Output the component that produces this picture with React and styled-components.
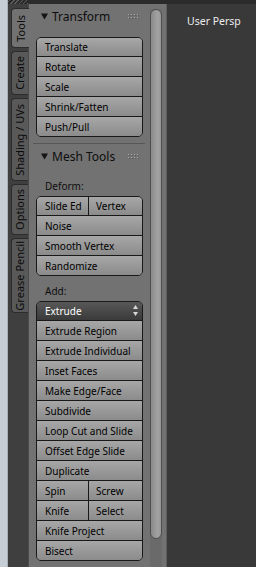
import React from "react";
import styled, { createGlobalStyle } from "styled-components";

const GlobalStyle = createGlobalStyle`
  *, *::before, *::after { box-sizing: border-box; }
  html, body { margin: 0; padding: 0; background: #393939; }
  body { font-family: "Noto Sans", "DejaVu Sans", sans-serif; }
`;

const Screen = styled.div`
  display: flex;
  width: 256px;
  height: 567px;
  overflow: hidden;
`;

const WindowEdge = styled.div`
  flex: none;
  width: 8px;
  background: #c7cdd4;
  border-right: 1px solid #a9b0b8;
`;

const Main = styled.div`
  flex: 1;
  display: flex;
  flex-direction: column;
  min-width: 0;
`;

const TopBar = styled.div`
  flex: none;
  height: 4px;
  background: #2b2b2b;
  &::before {
    content: "";
    display: block;
    width: 20px;
    height: 4px;
    background: repeating-linear-gradient(-45deg, #5c5c5c 0 1px, #2b2b2b 1px 3px);
  }
`;

const Body = styled.div`
  flex: 1;
  display: flex;
  min-height: 0;
`;

/* vertical tabs */
const TabStrip = styled.div`
  flex: none;
  width: 20px;
  display: flex;
  flex-direction: column;
  gap: 3px;
  padding: 4px 0 0 3px;
  background: #3f3f3f;
`;

const Tab = styled.div`
  height: ${(p) => p.$h}px;
  display: flex;
  align-items: center;
  justify-content: center;
  border: 1px solid #2c2c2c;
  border-right: none;
  border-radius: 4px 0 0 4px;
  background: ${(p) => (p.$active ? "#727272" : "#595959")};
  margin-right: ${(p) => (p.$active ? "-1px" : "0")};
  position: relative;
  z-index: ${(p) => (p.$active ? 1 : 0)};
`;

const TabLabel = styled.span`
  writing-mode: vertical-rl;
  transform: rotate(180deg);
  font-size: 11px;
  line-height: 12px;
  color: #0a0a0a;
  white-space: nowrap;
`;

/* tool shelf */
const Shelf = styled.div`
  flex: none;
  width: 120px;
  background: #727272;
  border-left: 1px solid #4b4b4b;
`;

const Panel = styled.section`
  padding-bottom: 6px;
`;

const Divider = styled.div`
  height: 1px;
  margin: 0 3px 0 4px;
  background: #575757;
`;

const PanelHeader = styled.div`
  height: 24px;
  display: flex;
  align-items: center;
  gap: 4px;
  padding: 0 8px 0 12px;
  font-size: 12px;
  color: #0d0d0d;
`;

const HeaderTitle = styled.span`
  flex: 1;
  white-space: nowrap;
`;

const PanelBody = styled.div`
  padding: ${(p) => p.$top}px 5px 0 7px;
`;

const GroupLabel = styled.div`
  height: 20px;
  display: flex;
  align-items: center;
  padding-left: 9px;
  margin-top: ${(p) => p.$gap || 0}px;
  font-size: 10px;
  color: #0d0d0d;
`;

const Column = styled.div`
  display: flex;
  flex-direction: column;
  border: 1px solid #191919;
  border-radius: 5px;
  overflow: hidden;
`;

const Row = styled.div`
  display: flex;
  height: 20px;
  border-top: 1px solid #191919;
  &:first-child {
    height: 18px;
    border-top: none;
  }
`;

const ToolButton = styled.div`
  flex: 1;
  display: flex;
  align-items: center;
  padding: 0 8px;
  background: linear-gradient(#a7a7a7, #8b8b8b);
  font-size: 10px;
  color: #000;
  white-space: nowrap;
  overflow: hidden;
  & + & {
    flex: 0 0 54px;
    border-left: 1px solid #191919;
    padding-left: 7px;
  }
`;

const Dropdown = styled.div`
  flex: none;
  height: 18px;
  display: flex;
  align-items: center;
  justify-content: space-between;
  padding: 0 4px 0 8px;
  background: linear-gradient(#585858, #3a3a3a);
  font-size: 10px;
  color: #fff;
`;

/* scrollbar */
const Gutter = styled.div`
  flex: none;
  width: 19px;
  display: flex;
  padding: 5px 4px 0 2px;
  background: #727272;
  border-right: 1px solid #5e5e5e;
`;

const Track = styled.div`
  flex: 1;
  background: #6a6a6a;
`;

const Thumb = styled.div`
  height: 530px;
  border: 1px solid #4e4e4e;
  border-radius: 7px;
  background: linear-gradient(to right, #8a8a8a, #a3a3a3 70%, #959595);
`;

/* 3d view */
const Viewport = styled.div`
  flex: 1;
  background: #393939;
  padding: 10px 0 0 20px;
`;

const ViewLabel = styled.div`
  font-size: 10.5px;
  line-height: 14px;
  color: #ececec;
  white-space: nowrap;
`;

const Triangle = () => (
  <svg width="7" height="7" viewBox="0 0 7 7">
    <path d="M0 0.5 H7 L3.5 6.5 Z" fill="#141414" />
  </svg>
);

const Grip = () => (
  <svg width="12" height="5" viewBox="0 0 12 5">
    {[0, 3, 6, 9].map((x) =>
      [0, 3].map((y) => (
        <g key={`${x}-${y}`}>
          <rect x={x} y={y} width="1" height="1" fill="#a8a8a8" />
          <rect x={x + 1} y={y + 1} width="1" height="1" fill="#5a5a5a" />
        </g>
      ))
    )}
  </svg>
);

const UpDown = () => (
  <svg width="5" height="12" viewBox="0 0 5 12">
    <path d="M2.5 0 L5 4 H0 Z" fill="#d8d8d8" />
    <path d="M0 7 H5 L2.5 11 Z" fill="#d8d8d8" />
  </svg>
);

const tabs = [
  { label: "Tools", h: 40, active: true },
  { label: "Create", h: 44 },
  { label: "Shading / UVs", h: 83 },
  { label: "Options", h: 51 },
  { label: "Grease Pencil", h: 75 },
];

const transformTools = [["Translate"], ["Rotate"], ["Scale"], ["Shrink/Fatten"], ["Push/Pull"]];
const deformTools = [["Slide Ed", "Vertex"], ["Noise"], ["Smooth Vertex"], ["Randomize"]];
const addTools = [
  ["Extrude Region"],
  ["Extrude Individual"],
  ["Inset Faces"],
  ["Make Edge/Face"],
  ["Subdivide"],
  ["Loop Cut and Slide"],
  ["Offset Edge Slide"],
  ["Duplicate"],
  ["Spin", "Screw"],
  ["Knife", "Select"],
  ["Knife Project"],
  ["Bisect"],
];

const ToolRows = ({ rows }) =>
  rows.map((cells) => (
    <Row key={cells.join("|")}>
      {cells.map((c) => (
        <ToolButton key={c}>{c}</ToolButton>
      ))}
    </Row>
  ));

const PanelTitle = ({ children }) => (
  <PanelHeader>
    <Triangle />
    <HeaderTitle>{children}</HeaderTitle>
    <Grip />
  </PanelHeader>
);

export default function App() {
  return (
    <>
      <GlobalStyle />
      <Screen>
        <WindowEdge />
        <Main>
          <TopBar />
          <Body>
            <TabStrip>
              {tabs.map((t) => (
                <Tab key={t.label} $h={t.h} $active={t.active}>
                  <TabLabel>{t.label}</TabLabel>
                </Tab>
              ))}
            </TabStrip>

            <Shelf>
              <Panel>
                <PanelTitle>Transform</PanelTitle>
                <PanelBody $top={9}>
                  <Column>
                    <ToolRows rows={transformTools} />
                  </Column>
                </PanelBody>
              </Panel>
              <Divider />
              <Panel>
                <PanelTitle>Mesh Tools</PanelTitle>
                <PanelBody $top={8}>
                  <GroupLabel>Deform:</GroupLabel>
                  <Column>
                    <ToolRows rows={deformTools} />
                  </Column>
                  <GroupLabel $gap={5}>Add:</GroupLabel>
                  <Column>
                    <Dropdown>
                      <span>Extrude</span>
                      <UpDown />
                    </Dropdown>
                    <ToolRows rows={addTools} />
                  </Column>
                </PanelBody>
              </Panel>
            </Shelf>

            <Gutter>
              <Track>
                <Thumb />
              </Track>
            </Gutter>

            <Viewport>
              <ViewLabel>User Persp</ViewLabel>
            </Viewport>
          </Body>
        </Main>
      </Screen>
    </>
  );
}
